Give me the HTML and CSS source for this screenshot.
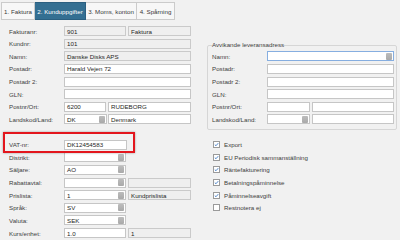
FILE: index.html
```html
<!DOCTYPE html>
<html lang="sv">
<head>
<meta charset="utf-8">
<title>Kunduppgifter</title>
<link rel="stylesheet" href="styles.css">
</head>
<body>
<div class="tabs">
  <div class="tab t1">1. Faktura</div>
  <div class="tab t2 active">2. Kunduppgifter</div>
  <div class="tab t3">3. Moms, konton</div>
  <div class="tab t4">4. Spårning</div>
</div>
<div class="main">
  <div class="col-left">
    <div class="row"><span class="lbl">Fakturanr:</span><span class="inp dis w62">901</span><span class="inp dis w63 g2">Faktura</span></div>
    <div class="row"><span class="lbl">Kundnr:</span><span class="inp dis w127">101</span></div>
    <div class="row"><span class="lbl">Namn:</span><span class="inp dis w127">Danske Disks APS</span></div>
    <div class="row"><span class="lbl">Postadr:</span><span class="inp w127">Harald Vejen 72</span></div>
    <div class="row"><span class="lbl">Postadr 2:</span><span class="inp w127"></span></div>
    <div class="row"><span class="lbl">GLN:</span><span class="inp w127"></span></div>
    <div class="row"><span class="lbl">Postnr/Ort:</span><span class="inp w42">6200</span><span class="inp w83 g2">RUDEBORG</span></div>
    <div class="row"><span class="lbl">Landskod/Land:</span><span class="inp w43">DK<span class="btn"></span></span><span class="inp w83 g1">Denmark</span></div>
    <div class="row spacer"></div>
    <div class="row vat"><span class="lbl">VAT-nr:</span><span class="inp w63">DK12454583</span><span class="highlight"></span></div>
    <div class="row"><span class="lbl">Distrikt:</span><span class="inp w62"><span class="btn"></span></span></div>
    <div class="row"><span class="lbl">Säljare:</span><span class="inp w62">AO<span class="btn"></span></span></div>
    <div class="row"><span class="lbl">Rabattavtal:</span><span class="inp w62"><span class="btn"></span></span><span class="inp dis w63 g2"></span></div>
    <div class="row"><span class="lbl">Prislista:</span><span class="inp w62">1<span class="btn"></span></span><span class="inp dis w63 g2">Kundprislista</span></div>
    <div class="row"><span class="lbl">Språk:</span><span class="inp w62">SV<span class="btn"></span></span></div>
    <div class="row"><span class="lbl">Valuta:</span><span class="inp w62">SEK<span class="btn"></span></span></div>
    <div class="row"><span class="lbl">Kurs/enhet:</span><span class="inp w62">1.0</span><span class="inp dis w63 g2">1</span></div>
  </div>
  <div class="col-right">
    <fieldset class="group">
      <legend>Avvikande leveransadress</legend>
      <div class="row"><span class="lbl">Namn:</span><span class="inp focus w127"><span class="btn"></span></span></div>
      <div class="row"><span class="lbl">Postadr:</span><span class="inp w127"></span></div>
      <div class="row"><span class="lbl">Postadr 2:</span><span class="inp w127"></span></div>
      <div class="row"><span class="lbl">GLN:</span><span class="inp w127"></span></div>
      <div class="row"><span class="lbl">Postnr/Ort:</span><span class="inp w43"></span><span class="inp w82 g2"></span></div>
      <div class="row last"><span class="lbl">Landskod/Land:</span><span class="inp w43"><span class="btn"></span></span><span class="inp w82 g2"></span></div>
    </fieldset>
    <div class="checks">
      <div class="row chk"><span class="box on"><svg viewBox="0 0 8 8"><path d="M1.3 4.2 L3.2 6 L6.8 1.8"/></svg></span><span>Export</span></div>
      <div class="row chk"><span class="box on"><svg viewBox="0 0 8 8"><path d="M1.3 4.2 L3.2 6 L6.8 1.8"/></svg></span><span>EU Periodisk sammanställning</span></div>
      <div class="row chk"><span class="box on"><svg viewBox="0 0 8 8"><path d="M1.3 4.2 L3.2 6 L6.8 1.8"/></svg></span><span>Räntefakturering</span></div>
      <div class="row chk"><span class="box on"><svg viewBox="0 0 8 8"><path d="M1.3 4.2 L3.2 6 L6.8 1.8"/></svg></span><span>Betalningspåminnelse</span></div>
      <div class="row chk"><span class="box on"><svg viewBox="0 0 8 8"><path d="M1.3 4.2 L3.2 6 L6.8 1.8"/></svg></span><span>Påminnelseavgift</span></div>
      <div class="row chk"><span class="box"></span><span>Restnotera ej</span></div>
    </div>
  </div>
</div>
</body>
</html>
```

FILE: styles.css
```css
* { box-sizing: border-box; }
html, body {
  margin: 0;
  padding: 0;
  width: 400px;
  height: 240px;
  overflow: hidden;
  background: #f1f1f1;
  font-family: "Liberation Sans", Arial, sans-serif;
  font-size: 6.2px;
  color: #3a3a3a;
}
.tabs {
  display: flex;
  padding: 2px 0 0 1px;
  height: 20px;
}
.tab {
  height: 18px;
  border: 1px solid #cbcbcb;
  background: #f7f7f7;
  display: flex;
  align-items: center;
  justify-content: center;
  white-space: nowrap;
  color: #3a3a3a;
}
.tab + .tab { border-left: none; }
.t1 { width: 34px; }
.t2 { width: 51px; }
.t3 { width: 51px; }
.t4 { width: 38px; }
.tab.active {
  background: #346f92;
  border-color: #2b5f80;
  color: #fff;
}
.main {
  display: flex;
  padding-top: 6px;
}
.col-left {
  width: 207px;
  padding-left: 9px;
}
.col-right {
  width: 190px;
}
.row {
  display: flex;
  align-items: center;
  height: 10px;
  margin-bottom: 2.625px;
}
.lbl {
  width: 55px;
  flex: none;
  white-space: nowrap;
  color: #404040;
}
.inp {
  flex: none;
  display: flex;
  align-items: center;
  height: 10px;
  border: 1px solid #c6c6c6;
  background: #fff;
  padding: 0 1px 0 2px;
  white-space: nowrap;
  overflow: hidden;
  color: #262626;
}
.inp.dis {
  background: #efefef;
  border-color: #cacaca;
}
.inp.focus {
  border-color: #86aee0;
}
.btn {
  margin-left: auto;
  width: 6px;
  height: 7px;
  border-radius: 1px;
  background: linear-gradient(#bcbcbc, #a9a9a9);
  flex: none;
}
.w42 { width: 42px; }
.w43 { width: 43px; }
.w62 { width: 62px; }
.w63 { width: 63px; }
.w82 { width: 82px; }
.w83 { width: 83px; }
.w127 { width: 127px; }
.g1 { margin-left: 1px; }
.g2 { margin-left: 2px; }
.vat { position: relative; }
.highlight {
  position: absolute;
  left: -6px;
  top: -7.6px;
  width: 132px;
  height: 21px;
  border: 2.6px solid #e3161d;
  box-shadow: 0 0 2px rgba(0, 0, 0, 0.35);
}
.group {
  margin: 15px 0 0 0;
  padding: 2.25px 2px 4.6px 4px;
  border: 1px solid #d6d6d6;
  border-radius: 2px;
  min-width: 0;
}
.group legend {
  padding: 0;
  line-height: 8px;
  height: 8px;
  color: #404040;
}
.group .row.last { margin-bottom: 0; }
.checks {
  margin-top: 9.6px;
  padding-left: 6px;
}
.chk { color: #404040; }
.box {
  width: 7px;
  height: 7px;
  border: 1px solid #9a9a9a;
  background: #fff;
  margin-right: 4px;
  flex: none;
  display: flex;
}
.box svg { width: 100%; height: 100%; }
.box path {
  fill: none;
  stroke: #2f6fbf;
  stroke-width: 1.3;
}
```
